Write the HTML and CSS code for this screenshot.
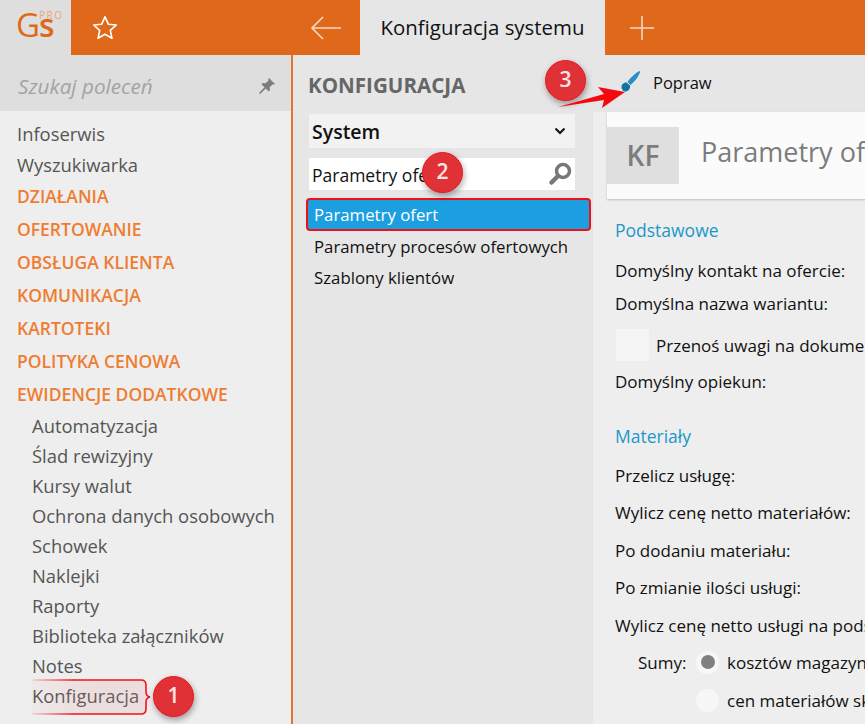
FILE: index.html
```html
<!DOCTYPE html>
<html lang="pl">
<head>
    <meta charset="UTF-8">
    <meta name="viewport" content="width=device-width, initial-scale=1.0">
    <title>Konfiguracja systemu</title>
    <link rel="stylesheet" href="styles.css">
</head>
<body>
    <header class="topbar">
        <div class="logo">
            <span class="logo-gs">G<span class="logo-s">s</span></span>
            <span class="logo-pro">PRO</span>
        </div>
        <div class="fav">
            <svg width="26" height="26" viewBox="0 0 26 26"><path d="M13 1.800l3.300 7.400 8 .8-6 5.400 1.700 7.900-7-4.100-7 4.100 1.700-7.900-6-5.400 8-.8z" fill="none" stroke="#fff" stroke-width="1.600" stroke-linejoin="round"/></svg>
        </div>
        <div class="back">
            <svg width="32" height="26" viewBox="0 0 32 26"><path d="M31 13H2M13 2L2 13l11 11" fill="none" stroke="#f5d9c4" stroke-width="1.600"/></svg>
        </div>
        <div class="tab">Konfiguracja systemu</div>
        <div class="add">
            <svg width="26" height="26" viewBox="0 0 26 26"><path d="M13 1v24M1 13h24" fill="none" stroke="#f5d9c4" stroke-width="1.600"/></svg>
        </div>
    </header>

    <div class="main">
        <aside class="sidebar">
            <div class="search">
                <span>Szukaj poleceń</span>
                <svg width="18" height="18" viewBox="0 0 18 18"><path d="M11 1l6 6-1.300 .8-1-.5-3 3 .2 3-1.200 1.200-3-3L2 17l-1-1 5.500-5.700-3-3L4.700 6l3 .2 3-3-.5-1z" fill="#7d7d7d"/></svg>
            </div>
            <nav class="menu">
                <a class="item">Infoserwis</a>
                <a class="item">Wyszukiwarka</a>
                <a class="group">DZIAŁANIA</a>
                <a class="group">OFERTOWANIE</a>
                <a class="group">OBSŁUGA KLIENTA</a>
                <a class="group">KOMUNIKACJA</a>
                <a class="group">KARTOTEKI</a>
                <a class="group">POLITYKA CENOWA</a>
                <a class="group">EWIDENCJE DODATKOWE</a>
                <div class="submenu">
                    <a class="sub">Automatyzacja</a>
                    <a class="sub">Ślad rewizyjny</a>
                    <a class="sub">Kursy walut</a>
                    <a class="sub">Ochrona danych osobowych</a>
                    <a class="sub">Schowek</a>
                    <a class="sub">Naklejki</a>
                    <a class="sub">Raporty</a>
                    <a class="sub">Biblioteka załączników</a>
                    <a class="sub">Notes</a>
                    <a class="sub sub-marked">Konfiguracja
                        <svg class="callout" width="120" height="36" viewBox="0 0 120 36">
                            <defs>
                                <linearGradient id="calloutLine" x1="0" x2="1" y1="0" y2="0">
                                    <stop offset="0" stop-color="#f0141c" stop-opacity="0.1"/>
                                    <stop offset="0.35" stop-color="#f0141c"/>
                                </linearGradient>
                                <linearGradient id="calloutFill" x1="0" x2="1" y1="0" y2="0">
                                    <stop offset="0" stop-color="#e88" stop-opacity="0.05"/>
                                    <stop offset="0.5" stop-color="#d88" stop-opacity="0.16"/>
                                </linearGradient>
                            </defs>
                            <path d="M0 1H109q5 0 5 5V13q0 4 4 5q-4 1-4 5V30q0 5-5 5H0" fill="url(#calloutFill)" stroke="url(#calloutLine)" stroke-width="1.600"/>
                        </svg>
                    </a>
                </div>
            </nav>
        </aside>

        <section class="middle">
            <h2>KONFIGURACJA</h2>
            <div class="select">
                <span>System</span>
                <svg width="12" height="8" viewBox="0 0 12 8"><path d="M1.500 1.500L6 6l4.500-4.500" fill="none" stroke="#111" stroke-width="2"/></svg>
            </div>
            <div class="filter">
                <span>Parametry ofert</span>
                <svg width="24" height="24" viewBox="0 0 24 24"><circle cx="15" cy="9" r="6.500" fill="none" stroke="#777" stroke-width="3.500"/><path d="M9.500 14.500L3.500 20.500" stroke="#777" stroke-width="4.500" stroke-linecap="round"/></svg>
            </div>
            <ul class="list">
                <li class="active">Parametry ofert</li>
                <li>Parametry procesów ofertowych</li>
                <li>Szablony klientów</li>
            </ul>
        </section>

        <section class="content">
            <div class="toolbar">
                <svg width="24" height="24" viewBox="0 0 24 24"><path d="M21.500 1C18 2.500 12.500 7.500 9.500 12l3 3c4-3 8-8.500 9.500-12.500.2-.8-.2-1.700-.5-1.500z" fill="#2a8fc4"/><path d="M8.500 12.500c-2.500 0-5 1.500-5 4.500 0 3 2.500 5 4.500 4.500 2.500-.5 4.500-3 4-6z" fill="#1273a6"/></svg>
                <span>Popraw</span>
            </div>
            <div class="card">
                <div class="badge-kf">KF</div>
                <div class="card-title">Parametry ofert</div>
            </div>
            <div class="form">
                <h3>Podstawowe</h3>
                <div class="row row-first">Domyślny kontakt na ofercie:</div>
                <div class="row row-tight">Domyślna nazwa wariantu:</div>
                <div class="check-row"><span class="check"></span>Przenoś uwagi na dokumenty</div>
                <div class="row row-after-check">Domyślny opiekun:</div>
                <h3 class="second">Materiały</h3>
                <div class="row">Przelicz usługę:</div>
                <div class="row">Wylicz cenę netto materiałów:</div>
                <div class="row">Po dodaniu materiału:</div>
                <div class="row">Po zmianie ilości usługi:</div>
                <div class="row">Wylicz cenę netto usługi na podstawie:</div>
                <div class="radio-row"><span class="radio-label">Sumy:</span><span class="radio on"></span>kosztów magazynowych</div>
                <div class="radio-row"><span class="radio-label"></span><span class="radio"></span>cen materiałów sklepowych</div>
            </div>
        </section>
    </div>

    <!-- adnotacje -->
    <div class="num num-1">1</div>
    <div class="num num-2">2</div>
    <div class="num num-3">3</div>
    <svg class="arrow" width="70" height="32" viewBox="0 0 70 32"><path d="M1 27L47 14 41 7 68 12 45 28 47 20z" fill="#f5090f"/></svg>
</body>
</html>
```

FILE: styles.css
```css
* {
    box-sizing: border-box;
}
html, body {
    height: 100%;
}
body {
    margin: 0;
    overflow: hidden;
    background-color: #eeeeee;
    font-family: "Open Sans", "Noto Sans", sans-serif;
    font-size: 17px;
    color: #222;
}
.topbar {
    display: flex;
    height: 55px;
    background-color: #e0681a;
}
.logo {
    position: relative;
    width: 71px;
    background-color: #dedede;
    color: #e0681a;
}
.logo-gs {
    display: block;
    padding: 6px 0 0 16px;
    font-size: 33px;
    line-height: 38px;
    letter-spacing: -1px;
}
.logo-s {
    font-weight: 600;
    font-size: 32px;
}
.logo-pro {
    position: absolute;
    left: 39px;
    top: 9px;
    font-size: 10px;
    font-weight: 500;
    line-height: 12px;
    letter-spacing: 1.500px;
    color: #eda77a;
}
.fav {
    display: flex;
    align-items: center;
    width: 224px;
    padding-left: 21px;
}
.back {
    display: flex;
    align-items: center;
    width: 65px;
    padding-left: 15px;
}
.tab {
    width: 245px;
    background-color: #e6e6e6;
    color: #111;
    font-size: 20.400px;
    font-weight: 500;
    line-height: 54px;
    text-align: center;
}
.add {
    display: flex;
    align-items: center;
    padding-left: 24px;
}
.main {
    display: flex;
    height: 669px;
}
.sidebar {
    width: 293px;
    flex-shrink: 0;
    background-color: #eeeeee;
    border-right: 2px solid #e0772f;
}
.search {
    display: flex;
    align-items: center;
    justify-content: space-between;
    height: 56px;
    padding: 5px 15px 0 18px;
    background-color: #dedede;
    color: #a3a3a3;
    font-size: 20.700px;
    font-style: italic;
}
.menu {
    display: flex;
    flex-direction: column;
    padding: 7px 0 0 17px;
}
.item, .sub {
    display: block;
    color: #555;
    font-size: 18.400px;
    line-height: 30px;
}
.item {
    line-height: 31px;
}
.group {
    display: block;
    color: #ee7d32;
    font-size: 17.500px;
    font-weight: 600;
    line-height: 33px;
}
.submenu {
    padding-left: 15px;
}
.sub-marked {
    position: relative;
    width: 120px;
}
.callout {
    position: absolute;
    left: 0;
    top: -2px;
}
.middle {
    width: 300px;
    flex-shrink: 0;
    padding: 15px 18px 0 16px;
    background-color: #e6e6e6;
    color: #111;
}
.middle h2 {
    margin: 0 0 14px -1px;
    color: #666;
    font-size: 20.600px;
    font-weight: 700;
    line-height: 30px;
    white-space: nowrap;
}
.select {
    display: flex;
    align-items: center;
    justify-content: space-between;
    height: 34px;
    padding: 0 9px 0 3px;
    background-color: #f2f2f2;
    font-size: 19.500px;
    font-weight: 600;
}
.filter {
    display: flex;
    align-items: center;
    justify-content: space-between;
    height: 32px;
    margin-top: 10px;
    padding: 2px 3px 0 3px;
    background-color: #fff;
    font-size: 17.500px;
}
.filter svg {
    margin-top: -2px;
}
.list {
    list-style: none;
    margin: 8px 0 0 -3px;
    padding: 0;
    width: 285px;
    font-size: 16.800px;
}
.list li {
    padding-left: 8px;
    line-height: 31px;
    white-space: nowrap;
}
.list .active {
    height: 33px;
    border: 2px solid #ee1118;
    border-radius: 4px;
    padding-left: 6px;
    background-color: #1c9fe0;
    color: #fff;
    line-height: 29px;
}
.content {
    flex: 1;
    min-width: 0;
    overflow: hidden;
}
.toolbar {
    display: flex;
    align-items: center;
    gap: 11px;
    height: 57px;
    padding: 0 0 3px 25px;
    background-color: #e6e6e6;
    font-size: 16.500px;
    color: #111;
}
.card {
    display: flex;
    align-items: center;
    height: 87px;
    margin-left: 14px;
    width: 300px;
    background-color: #fbfbfb;
    box-shadow: 0 1px 2px rgba(0, 0, 0, 0.2);
}
.badge-kf {
    width: 72px;
    height: 57px;
    margin-top: -1px;
    background-color: #dfdfdf;
    color: #7c7c7c;
    font-size: 28px;
    font-weight: 600;
    line-height: 57px;
    text-align: center;
}
.card-title {
    margin: -8px 0 0 22px;
    color: #7c7c7c;
    font-size: 27px;
    white-space: nowrap;
}
.form {
    width: 400px;
    padding: 17px 0 0 22px;
    color: #111;
    white-space: nowrap;
}
.form h3 {
    margin: 0 0 7px;
    color: #1b98c9;
    font-size: 17.500px;
    font-weight: 400;
    line-height: 28px;
}
.form .second {
    margin-top: 21px;
}
.row {
    line-height: 37.500px;
}
.row-first {
    margin-top: 11px;
    line-height: 32px;
}
.row-tight {
    margin-top: 1px;
    line-height: 32px;
}
.row-after-check {
    margin-top: 2px;
}
.check-row {
    display: flex;
    align-items: center;
    height: 32px;
    margin-top: 9px;
}
.check {
    width: 33px;
    height: 32px;
    margin: 0 7px 0 1px;
    background-color: #f5f5f5;
}
.radio-row {
    display: flex;
    align-items: center;
    height: 37.500px;
}
.radio-label {
    width: 81px;
    padding-left: 23px;
}
.radio {
    position: relative;
    width: 23px;
    height: 23px;
    margin-right: 8px;
    border-radius: 50%;
    background-color: #f7f7f7;
}
.radio.on::after {
    content: "";
    position: absolute;
    left: 5px;
    top: 4px;
    width: 14px;
    height: 14px;
    border-radius: 50%;
    background-color: #808080;
}
.num {
    position: absolute;
    width: 41px;
    height: 41px;
    border: 1.500px solid #f0141c;
    border-radius: 50%;
    background-color: #e03236;
    box-shadow: 1px 3px 6px rgba(0, 0, 0, 0.35);
    color: #fbe4e4;
    font-size: 21px;
    font-weight: 600;
    line-height: 37px;
    text-align: center;
}
.num-1 {
    left: 153px;
    top: 676px;
}
.num-2 {
    left: 422px;
    top: 152px;
}
.num-3 {
    left: 545px;
    top: 60px;
}
.arrow {
    position: absolute;
    left: 557px;
    top: 80px;
}
```
